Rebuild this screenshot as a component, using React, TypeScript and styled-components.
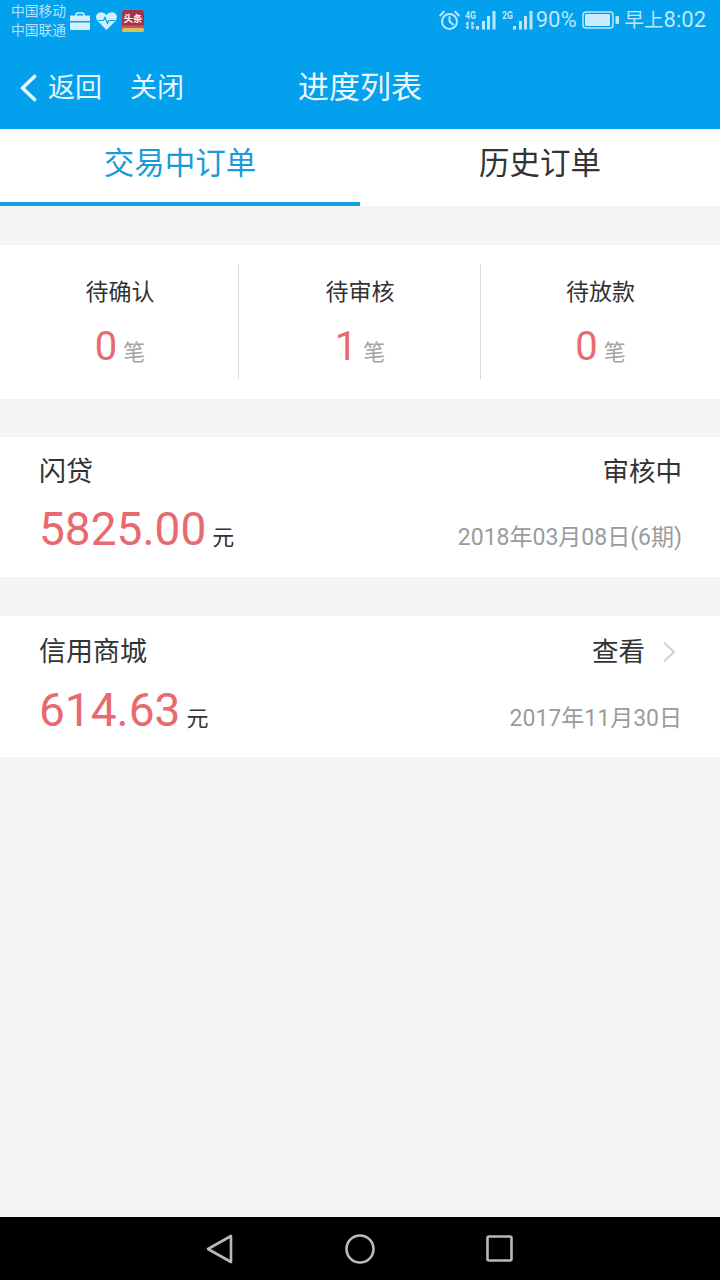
import React from "react";
import styled, { createGlobalStyle } from "styled-components";

const GlobalStyle = createGlobalStyle`
  html, body {
    margin: 0;
    padding: 0;
    background: #f4f4f4;
    font-family: Roboto, "Noto Sans CJK SC", sans-serif;
  }
`;

const Page = styled.div`
  width: 720px;
  height: 1280px;
  display: flex;
  flex-direction: column;
  background: #f4f4f4;
  overflow: hidden;
`;

const Header = styled.header`
  height: 129px;
  flex: none;
  background: #03a0ee;
  display: flex;
  flex-direction: column;
`;

const StatusBar = styled.div`
  height: 40px;
  display: flex;
  align-items: center;
  justify-content: space-between;
  padding: 0 14px 0 11px;
  color: #bfe6fb;
`;

const StatusGroup = styled.div`
  display: flex;
  align-items: center;
`;

const RightGroup = styled(StatusGroup)`
  gap: 5px;
`;

const Carriers = styled.div`
  font-size: 13.750px;
  line-height: 19px;
  width: 57px;
  margin-right: 1px;
  color: #b5e2fa;
  margin-top: 1px;
`;

const NotifyIcons = styled.div`
  display: flex;
  align-items: center;
  gap: 5px;
  margin-top: 2px;
`;

const StatusText = styled.span`
  font-size: 22px;
  line-height: 24px;
  color: #bfe6fb;
`;

const StatusCjk = styled.span`
  font-size: 19.500px;
`;

const Percent = styled(StatusText)`
  margin-left: -3px;
`;

const NavBar = styled.div`
  height: 89px;
  padding-top: 7px;
  box-sizing: border-box;
  display: grid;
  grid-template-columns: 1fr auto 1fr;
  align-items: center;
`;

const NavLeft = styled.div`
  display: flex;
  align-items: center;
  padding-left: 19px;
  color: #e6f6fe;
  font-size: 27px;
`;

const NavLink = styled.span<{ $gap: number }>`
  margin-left: ${(p) => p.$gap}px;
  line-height: 36px;
`;

const NavTitle = styled.div`
  font-size: 31px;
  color: #eaf7fe;
  line-height: 40px;
`;

const Tabs = styled.nav`
  height: 77px;
  flex: none;
  background: #fff;
  display: flex;
`;

const Tab = styled.div<{ $active?: boolean }>`
  flex: 1;
  box-sizing: border-box;
  display: flex;
  align-items: center;
  justify-content: center;
  padding-bottom: 10px;
  font-size: 30.500px;
  color: ${(p) => (p.$active ? "#1a9bd8" : "#333")};
  border-bottom: 4px solid ${(p) => (p.$active ? "#119fe0" : "transparent")};
`;

const Summary = styled.section`
  margin-top: 39px;
  height: 154px;
  flex: none;
  box-sizing: border-box;
  padding: 19px 0 20px;
  background: #fff;
  display: grid;
  grid-template-columns: 238px 242px 240px;
`;

const SummaryCell = styled.div<{ $divider?: boolean; $shift: number }>`
  display: flex;
  flex-direction: column;
  align-items: center;
  padding-left: ${(p) => p.$shift}px;
  border-left: ${(p) => (p.$divider ? "1px solid #d8d8d8" : "none")};
`;

const SummaryLabel = styled.div`
  margin-top: 11px;
  font-size: 23px;
  line-height: 36px;
  color: #333;
`;

const SummaryValue = styled.div`
  display: flex;
  align-items: baseline;
  margin-top: 14px;
  line-height: 44px;
`;

const Count = styled.span`
  font-size: 40px;
  color: #e96a6e;
`;

const CountUnit = styled.span`
  font-size: 22px;
  color: #a3a3a3;
  margin-left: 6px;
`;

const OrderCard = styled.section<{ $top: number; $height: number; $pad: number; $gap: number }>`
  margin-top: ${(p) => p.$top}px;
  height: ${(p) => p.$height}px;
  flex: none;
  box-sizing: border-box;
  padding: ${(p) => p.$pad}px 38px 0 39px;
  background: #fff;
  display: flex;
  flex-direction: column;
  gap: ${(p) => p.$gap}px;
`;

const OrderRow = styled.div`
  display: flex;
  align-items: baseline;
  justify-content: space-between;
`;

const OrderName = styled.div`
  font-size: 27px;
  line-height: 38px;
  color: #333;
`;

const OrderStatus = styled.div`
  display: flex;
  align-items: center;
  font-size: 26.500px;
  line-height: 38px;
  color: #333;
`;

const Chevron = styled.svg`
  margin-left: 17px;
  margin-right: 6px;
`;

const Amount = styled.div`
  display: flex;
  align-items: baseline;
`;

const AmountValue = styled.span`
  font-size: 46px;
  line-height: 56px;
  color: #e96a6e;
`;

const AmountUnit = styled.span`
  font-size: 22px;
  color: #333;
  margin-left: 6px;
`;

const OrderDate = styled.div`
  font-size: 23px;
  color: #9b9b9b;
`;

const Spacer = styled.div`
  flex: 1;
`;

const SystemNav = styled.footer`
  height: 63px;
  flex: none;
  background: #000;
  display: flex;
  align-items: center;
  justify-content: center;
  gap: 111px;
  padding-right: 2px;
`;

const WorkCaseIcon = () => (
  <svg width="22" height="18" viewBox="0 0 22 18">
    <path d="M7 4V2.500C7 1.700 7.700 1 8.500 1h5c.8 0 1.500.7 1.500 1.500V4" fill="none" stroke="#d4eefc" strokeWidth="1.600" />
    <path d="M1 4.500C1 4 1.500 3.500 2 3.500h18c.5 0 1 .5 1 1V9H1z" fill="#d4eefc" />
    <path d="M1 10.500h20V17c0 .5-.5 1-1 1H2c-.5 0-1-.5-1-1z" fill="#d4eefc" />
  </svg>
);

const HeartIcon = () => (
  <svg width="21" height="18" viewBox="0 0 21 18">
    <path d="M10.500 18 1.800 9.200C-.6 6.700-.4 3 2 1.200 4.300-.5 7.800-.2 10.500 3c2.700-3.200 6.200-3.500 8.500-1.800 2.400 1.800 2.600 5.500.2 8z" fill="#d4eefc" />
    <path d="M2 8.500h5.500l1.500-3 2.500 6 1.500-3h6" fill="none" stroke="#03a0ee" strokeWidth="1.200" />
  </svg>
);

const NewsIcon = () => (
  <svg width="22" height="22" viewBox="0 0 22 22">
    <rect width="22" height="22" rx="3" fill="#a8324a" />
    <rect y="15.500" width="22" height="2.500" fill="#c95a5a" />
    <rect y="18" width="22" height="4" rx="1.500" fill="#d9c25e" />
    <text x="11" y="12" fontSize="9.500" fontWeight="700" textAnchor="middle" fill="#fff" fontFamily="'Noto Sans CJK SC', sans-serif">
      头条
    </text>
  </svg>
);

const AlarmIcon = () => (
  <svg width="21" height="21" viewBox="0 0 21 21" fill="none" stroke="#bfe6fb" strokeWidth="2" strokeLinecap="round">
    <circle cx="10.500" cy="11.500" r="7.500" />
    <path d="M10.500 7v4.500l3.500 3" />
    <path d="M1.200 5.500 4.700 1.800M19.800 5.500 16.300 1.800" />
  </svg>
);

const Signal = ({ label, dual }: { label: string; dual?: boolean }) => (
  <svg width="32" height="20" viewBox="0 0 32 20" fill="#bfe6fb">
    <text x="0" y="9" fontSize="11" fontWeight="700" textLength="11" lengthAdjust="spacingAndGlyphs" fontFamily="Roboto, sans-serif">
      {label}
    </text>
    {dual && (
      <>
        <path d="M3 12v7M3 19l-2-2.500M3 12l-2 2.500" fill="none" stroke="#bfe6fb" strokeWidth="1.300" />
        <path d="M7 12v7M7 19l2-2.500M7 12l2 2.500" fill="none" stroke="#bfe6fb" strokeWidth="1.300" />
      </>
    )}
    <rect x="11" y="16" width="3" height="3.500" />
    <rect x="17" y="11" width="3" height="8.500" />
    <rect x="22" y="6" width="3" height="13.500" />
    <rect x="27.500" y="1" width="3" height="18.500" />
  </svg>
);

const BatteryIcon = () => (
  <svg width="38" height="18" viewBox="0 0 38 18">
    <rect x="1" y="1" width="30" height="16" rx="3" fill="none" stroke="#bfe6fb" strokeWidth="1.500" />
    <rect x="3" y="3" width="25" height="12" rx="1" fill="#c8ecfd" />
    <rect x="33.500" y="5" width="3.500" height="8" rx="1" fill="#bfe6fb" />
  </svg>
);

const BackIcon = () => (
  <svg width="18" height="30" viewBox="0 0 18 30" fill="none" stroke="#eaf7fe" strokeWidth="3.600" strokeLinecap="round" strokeLinejoin="round">
    <path d="M15.500 3.500 3.500 15l12 11.500" />
  </svg>
);

const App: React.FC = () => {
  const summary = [
    { label: "待确认", count: 0, shift: 2 },
    { label: "待审核", count: 1, shift: 1 },
    { label: "待放款", count: 0, shift: 0 },
  ];

  return (
    <Page>
      <GlobalStyle />
      <Header>
        <StatusBar>
          <StatusGroup>
            <Carriers>
              中国移动
              <br />
              中国联通
            </Carriers>
            <NotifyIcons>
              <WorkCaseIcon />
              <HeartIcon />
              <NewsIcon />
            </NotifyIcons>
          </StatusGroup>
          <RightGroup>
            <AlarmIcon />
            <Signal label="4G" dual />
            <Signal label="2G" />
            <Percent>90%</Percent>
            <BatteryIcon />
            <StatusText>
              <StatusCjk>早上</StatusCjk>8:02
            </StatusText>
          </RightGroup>
        </StatusBar>
        <NavBar>
          <NavLeft>
            <BackIcon />
            <NavLink $gap={11}>返回</NavLink>
            <NavLink $gap={28}>关闭</NavLink>
          </NavLeft>
          <NavTitle>进度列表</NavTitle>
          <div />
        </NavBar>
      </Header>

      <Tabs>
        <Tab $active>交易中订单</Tab>
        <Tab>历史订单</Tab>
      </Tabs>

      <Summary>
        {summary.map((item, i) => (
          <SummaryCell key={item.label} $divider={i > 0} $shift={item.shift}>
            <SummaryLabel>{item.label}</SummaryLabel>
            <SummaryValue>
              <Count>{item.count}</Count>
              <CountUnit>笔</CountUnit>
            </SummaryValue>
          </SummaryCell>
        ))}
      </Summary>

      <OrderCard $top={38} $height={140} $pad={16} $gap={10}>
        <OrderRow>
          <OrderName>闪贷</OrderName>
          <OrderStatus>审核中</OrderStatus>
        </OrderRow>
        <OrderRow>
          <Amount>
            <AmountValue>5825.00</AmountValue>
            <AmountUnit>元</AmountUnit>
          </Amount>
          <OrderDate>2018年03月08日(6期)</OrderDate>
        </OrderRow>
      </OrderCard>

      <OrderCard $top={39} $height={141} $pad={17} $gap={11}>
        <OrderRow>
          <OrderName>信用商城</OrderName>
          <OrderStatus>
            查看
            <Chevron width="14" height="22" viewBox="0 0 14 22" fill="none" stroke="#cfcfcf" strokeWidth="2">
              <path d="M2 1.500 12 11 2 20.500" />
            </Chevron>
          </OrderStatus>
        </OrderRow>
        <OrderRow>
          <Amount>
            <AmountValue>614.63</AmountValue>
            <AmountUnit>元</AmountUnit>
          </Amount>
          <OrderDate>2017年11月30日</OrderDate>
        </OrderRow>
      </OrderCard>

      <Spacer />

      <SystemNav>
        <svg width="28" height="30" viewBox="0 0 28 30" fill="none" stroke="#b9b9b9" strokeWidth="2.600" strokeLinejoin="round">
          <path d="M25 2 2 15l23 13z" />
        </svg>
        <svg width="30" height="30" viewBox="0 0 30 30" fill="none" stroke="#b9b9b9" strokeWidth="2.600">
          <circle cx="15" cy="15" r="13.500" />
        </svg>
        <svg width="27" height="27" viewBox="0 0 27 27" fill="none" stroke="#b9b9b9" strokeWidth="2.600" strokeLinejoin="round">
          <rect x="1.500" y="1.500" width="24" height="24" rx="1.500" />
        </svg>
      </SystemNav>
    </Page>
  );
};

export default App;
